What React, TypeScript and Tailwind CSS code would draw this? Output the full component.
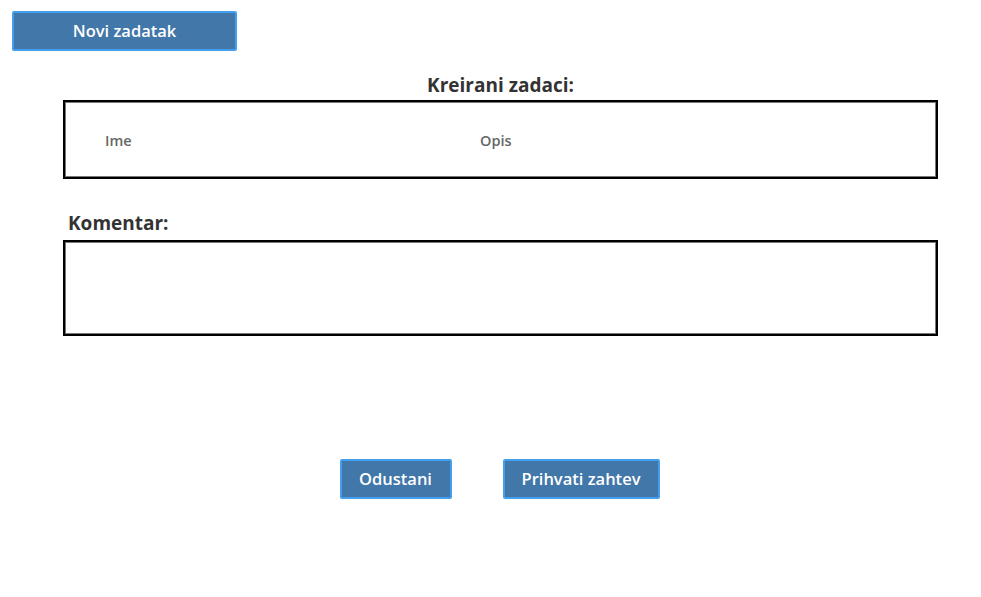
export default function App() {
  return (
    <div className="w-[981px] h-[597px] bg-white font-['Open_Sans',sans-serif] text-[#333]">
      <div className="pt-[11px] pl-[12px]">
        <button className="w-[225px] h-[40px] bg-[#4277a9] border-2 border-[#43a0f0] rounded-[2px] text-white text-[16.5px] font-semibold">
          Novi zadatak
        </button>
      </div>

      {/* Kreirani zadaci */}
      <div className="ml-[63px] w-[875px]">
        <h2 className="text-center text-[19px] font-bold leading-[24px] mt-[22px]">Kreirani zadaci:</h2>
        <div className="mt-[3px] h-[79px] border-2 border-black shadow-[inset_1px_1px_0_#777,inset_-1px_-1px_0_#777] flex items-center">
          <div className="flex w-full text-[14.5px] font-semibold text-[#666] pt-[2px]">
            <span className="pl-[40px] w-[415px]">Ime</span>
            <span>Opis</span>
          </div>
        </div>

        {/* Komentar */}
        <h2 className="mt-[32px] pl-[5px] text-[19px] font-bold leading-[24px]">Komentar:</h2>
        <div className="mt-[5px] h-[96px] border-2 border-black shadow-[inset_1px_1px_0_#777,inset_-1px_-1px_0_#777]" />
      </div>

      <div className="flex justify-center gap-[51px] mt-[123px] pl-[18px]">
        <button className="w-[112px] h-[40px] bg-[#4277a9] border-2 border-[#43a0f0] rounded-[2px] text-white text-[16.5px] font-semibold">
          Odustani
        </button>
        <button className="w-[157px] h-[40px] bg-[#4277a9] border-2 border-[#43a0f0] rounded-[2px] text-white text-[16.5px] font-semibold">
          Prihvati zahtev
        </button>
      </div>
    </div>
  )
}
